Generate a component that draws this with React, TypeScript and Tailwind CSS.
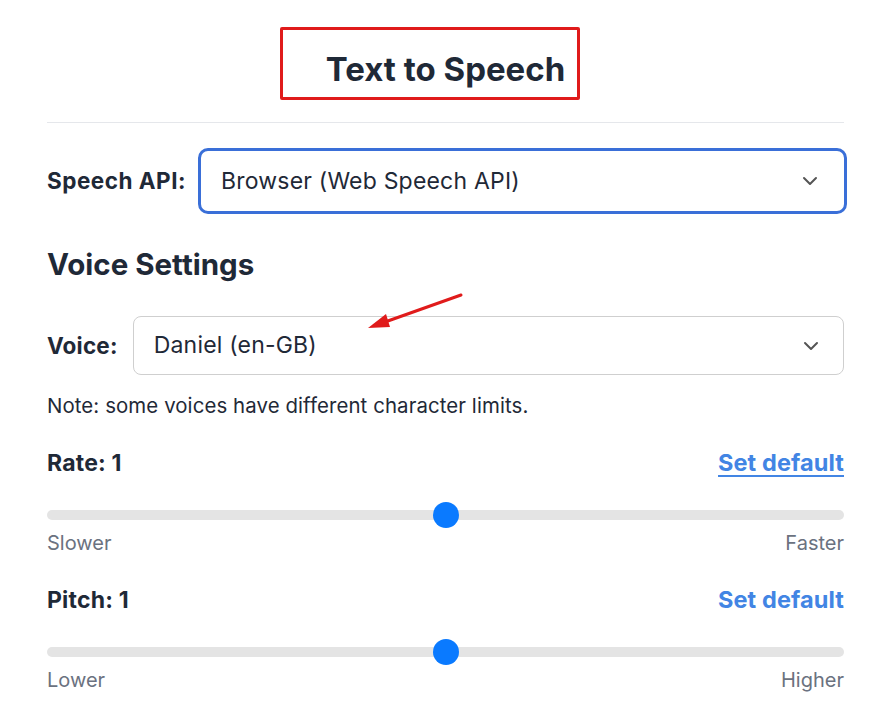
import { ChevronDown } from 'lucide-react';

function Slider({ pos }: { pos: number }) {
  return (
    <div className="relative h-[26px] flex items-center">
      <div className="h-[10px] w-full rounded-full bg-[#e4e4e4]" />
      <div
        className="absolute top-0 h-[26px] w-[26px] rounded-full bg-[#0a7aff] -translate-x-1/2"
        style={{ left: `${pos}%` }}
      />
    </div>
  );
}

function SettingRow({
  label,
  low,
  high,
  underline,
}: {
  label: string;
  low: string;
  high: string;
  underline?: boolean;
}) {
  return (
    <div>
      <div className="flex items-center justify-between h-[28px]">
        <span className="text-[23px] font-bold text-[#1f2937] tracking-[0.2px]">{label}</span>
        <span
          className={
            'text-[23.5px] font-bold text-[#4285e4] tracking-[0.1px] ' +
            (underline ? 'underline underline-offset-4 decoration-2' : '')
          }
        >
          Set default
        </span>
      </div>
      <div className="mt-[25px]">
        <Slider pos={50} />
      </div>
      <div className="mt-[3px] flex justify-between h-[24px] items-center text-[20px] text-[#6b7280]">
        <span>{low}</span>
        <span>{high}</span>
      </div>
    </div>
  );
}

export default function App() {
  return (
    <div
      className="relative w-[891px] h-[710px] bg-white overflow-hidden"
      style={{ fontFamily: 'Inter, "Noto Sans", sans-serif' }}
    >
      {/* title with red annotation box */}
      <div className="relative pt-[27px]">
        <div className="h-[73px] pt-[13px] flex items-center justify-center">
          <h1 className="text-[33px] font-bold text-[#1f2937]">Text to Speech</h1>
        </div>
        <div className="absolute left-[280px] top-[27px] w-[300px] h-[73px] border-[3px] border-[#e01b1b] rounded-[2px]" />
      </div>

      <div className="px-[47px]">
        <div className="mt-[22px] h-px bg-[#e5e7eb]" />

        {/* speech api */}
        <div className="mt-[25px] flex items-center gap-[12px] -mr-[3px]">
          <span className="text-[22.5px] font-bold text-[#1f2937] whitespace-nowrap tracking-[0.5px]">
            Speech API:
          </span>
          <div className="flex-1 h-[66px] rounded-[10px] border-[3px] border-[#3a6fd8] flex items-center justify-between pl-[20px] pr-[22px]">
            <span className="text-[23px] text-[#1f2937] tracking-[0.2px]">Browser (Web Speech API)</span>
            <ChevronDown size={24} strokeWidth={2} className="text-[#555]" />
          </div>
        </div>

        <h2 className="mt-[33px] h-[34px] flex items-center text-[29.5px] font-bold text-[#1f2937]">
          Voice Settings
        </h2>

        {/* voice */}
        <div className="mt-[35px] flex items-center gap-[15px]">
          <span className="text-[22.5px] font-bold text-[#1f2937] tracking-[0.2px]">Voice:</span>
          <div className="flex-1 h-[59px] rounded-[8px] border border-[#cfcfcf] flex items-center justify-between pl-[20px] pr-[20px]">
            <span className="text-[23px] text-[#1f2937] tracking-[0.2px]">Daniel (en-GB)</span>
            <ChevronDown size={24} strokeWidth={2} className="text-[#555]" />
          </div>
        </div>

        <p className="mt-[19px] h-[24px] flex items-center text-[20.4px] text-[#1f2937] tracking-[0.1px]">
          Note: some voices have different character limits.
        </p>

        <div className="mt-[31px]">
          <SettingRow label="Rate: 1" low="Slower" high="Faster" underline />
        </div>
        <div className="mt-[31px]">
          <SettingRow label="Pitch: 1" low="Lower" high="Higher" />
        </div>
      </div>

      {/* red annotation arrow */}
      <svg className="absolute left-0 top-0 pointer-events-none" width="891" height="710">
        <line x1="461" y1="295" x2="385" y2="322" stroke="#e01b1b" strokeWidth="3" strokeLinecap="round" />
        <polygon points="368,328 386,314 390,327" fill="#e01b1b" />
      </svg>
    </div>
  );
}
